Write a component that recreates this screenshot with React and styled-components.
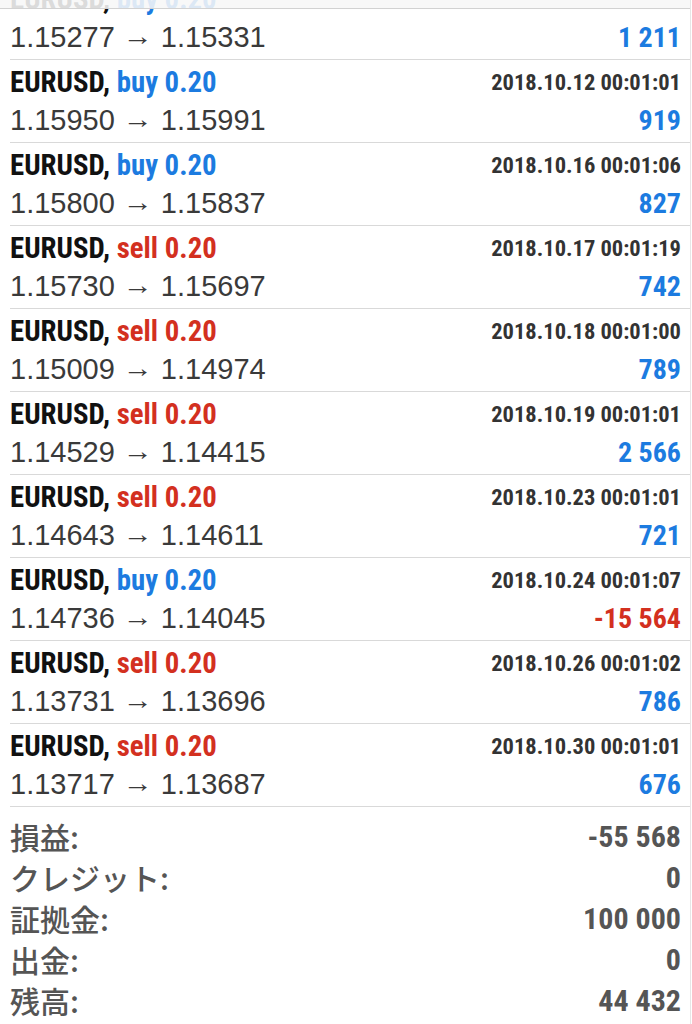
import React from 'react'
import styled, { createGlobalStyle } from 'styled-components'

const GlobalStyle = createGlobalStyle`
  html, body {
    margin: 0;
    padding: 0;
    background: #fff;
  }
  body {
    font-family: "Liberation Sans", Roboto, sans-serif;
    overflow: hidden;
  }
`

const Page = styled.div`
  position: relative;
  width: 690px;
  height: 1024px;
  overflow: hidden;
  border-right: 1px solid #e6e6e6;
`

const TopBar = styled.div`
  position: absolute;
  top: 0;
  left: 0;
  right: 0;
  height: 8px;
  background: rgba(247, 247, 247, 0.88);
  border-bottom: 1px solid #d2d2d2;
  z-index: 2;
`

const List = styled.div`
  margin-top: -23px;
  display: flex;
  flex-direction: column;
`

const Row = styled.div`
  box-sizing: border-box;
  height: 83px;
  margin-left: 10px;
  padding: 4px 9px 0 0;
  border-bottom: 1px solid #d9d9d9;
  display: grid;
  grid-template-columns: 1fr auto;
  grid-template-rows: 36px 40px;
  align-items: center;
`

const Title = styled.div`
  font-family: "Liberation Sans Narrow", "Roboto Condensed", Roboto, sans-serif;
  font-weight: 700;
  font-size: 28.8px;
  color: #111;
  white-space: nowrap;
`

const Side = styled.span`
  color: ${(p) => (p.$sell ? '#d3301f' : '#1c7be0')};
`

const Time = styled.div`
  font-family: "Liberation Sans Narrow", "Roboto Condensed", Roboto, sans-serif;
  font-weight: 700;
  font-size: 22.5px;
  color: #333;
  text-align: right;
`

const Prices = styled.div`
  font-family: "Liberation Sans", Roboto, sans-serif;
  font-size: 29px;
  color: #3a3a3a;
  white-space: nowrap;
`

const Arrow = styled.span`
  display: inline-block;
  font-size: 26px;
  margin: 0 10px;
  transform: scaleX(1.15);
  position: relative;
  top: -2px;
`

const Profit = styled.div`
  font-family: "Liberation Sans Narrow", "Roboto Condensed", Roboto, sans-serif;
  font-weight: 700;
  font-size: 28px;
  text-align: right;
  color: ${(p) => (p.$neg ? '#d3301f' : '#1c7be0')};
`

const Summary = styled.div`
  padding: 9px 9px 0 10px;
  display: grid;
  grid-template-columns: 1fr auto;
  grid-auto-rows: 41px;
  align-items: center;
`

const Label = styled.div`
  font-family: "Noto Sans CJK JP", sans-serif;
  font-weight: 500;
  font-size: 30px;
  line-height: 41px;
  color: #555;
`

const Value = styled.div`
  font-family: "Liberation Sans Narrow", "Roboto Condensed", Roboto, sans-serif;
  font-weight: 700;
  font-size: 30px;
  color: #555;
  text-align: right;
`

const deals = [
  { side: 'buy', time: '', from: '1.15277', to: '1.15331', profit: '1 211' },
  { side: 'buy', time: '2018.10.12 00:01:01', from: '1.15950', to: '1.15991', profit: '919' },
  { side: 'buy', time: '2018.10.16 00:01:06', from: '1.15800', to: '1.15837', profit: '827' },
  { side: 'sell', time: '2018.10.17 00:01:19', from: '1.15730', to: '1.15697', profit: '742' },
  { side: 'sell', time: '2018.10.18 00:01:00', from: '1.15009', to: '1.14974', profit: '789' },
  { side: 'sell', time: '2018.10.19 00:01:01', from: '1.14529', to: '1.14415', profit: '2 566' },
  { side: 'sell', time: '2018.10.23 00:01:01', from: '1.14643', to: '1.14611', profit: '721' },
  { side: 'buy', time: '2018.10.24 00:01:07', from: '1.14736', to: '1.14045', profit: '-15 564' },
  { side: 'sell', time: '2018.10.26 00:01:02', from: '1.13731', to: '1.13696', profit: '786' },
  { side: 'sell', time: '2018.10.30 00:01:01', from: '1.13717', to: '1.13687', profit: '676' },
]

const totals = [
  ['損益:', '-55 568'],
  ['クレジット:', '0'],
  ['証拠金:', '100 000'],
  ['出金:', '0'],
  ['残高:', '44 432'],
]

const App = () => {
  return (
    <Page>
      <GlobalStyle />
      <TopBar />
      <List>
        {deals.map((d, i) => (
          <Row key={i}>
            <Title>
              EURUSD, <Side $sell={d.side === 'sell'}>{d.side} 0.20</Side>
            </Title>
            <Time>{d.time}</Time>
            <Prices>
              {d.from}<Arrow>→</Arrow>{d.to}
            </Prices>
            <Profit $neg={d.profit.startsWith('-')}>{d.profit}</Profit>
          </Row>
        ))}
      </List>
      <Summary>
        {totals.map(([label, value]) => (
          <React.Fragment key={label}>
            <Label>{label}</Label>
            <Value>{value}</Value>
          </React.Fragment>
        ))}
      </Summary>
    </Page>
  )
}

export default App
